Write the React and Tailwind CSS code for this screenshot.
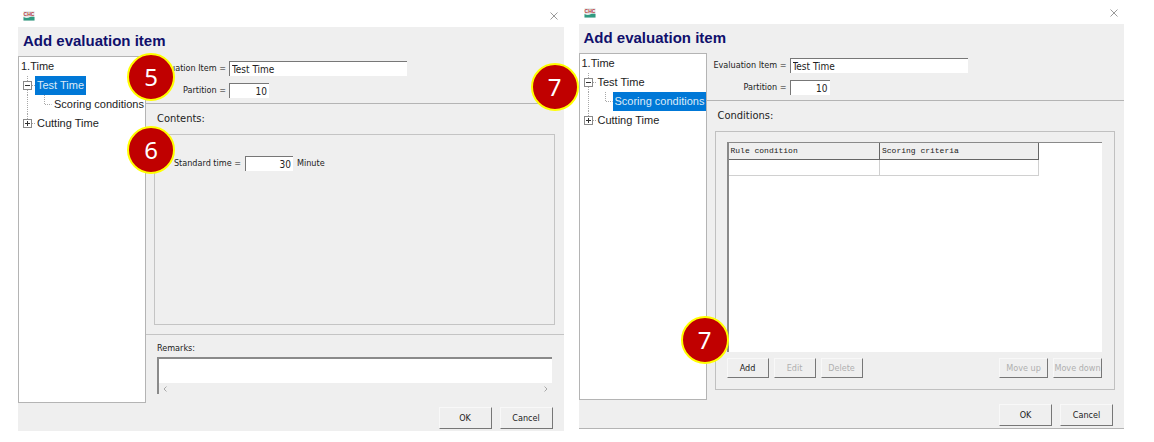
import React, { useState } from 'react';

// --- ICONS ---
const Logo = () => (
  <svg className="w-3 h-[10px]" viewBox="0 0 24 20" role="img" aria-label="CHC">
    <rect x="1" y="0" width="22" height="20" fill="#e6ecea" />
    <text x="12" y="9" textAnchor="middle" fontSize="10" fontWeight="700" fontFamily="Liberation Sans, sans-serif" fill="#b8383f">CHC</text>
    <path d="M1 12c5 3 9 2 13 0 4-1 7-1 9 0v7H1z" fill="#2f9a80" />
  </svg>
);

const IconClose = () => (
  <svg className="w-2 h-2" viewBox="0 0 8 8" fill="none" stroke="#9a9a9a"><path d="M.5.5l7 7M7.5.5l-7 7" /></svg>
);

// Dotted branch with the expand / collapse box
const Branch = ({ open }) => (
  <svg className="w-4 h-[19px] shrink-0" viewBox="0 0 16 19" fill="none">
    <path d={open ? 'M8.5 0v19' : 'M8.5 0v6'} stroke="#a8a8a8" strokeDasharray="1 1" />
    <path d="M13 9.5h3" stroke="#a8a8a8" strokeDasharray="1 1" />
    <rect x="4.5" y="5.5" width="8" height="8" fill="#fff" stroke="#8a8a8a" />
    <path d={open ? 'M6 9.5h5' : 'M6 9.5h5M8.5 7v5'} stroke="#333" />
  </svg>
);

const SubBranch = () => (
  <svg className="w-[33px] h-[19px] shrink-0" viewBox="0 0 33 19" fill="none" stroke="#a8a8a8" strokeDasharray="1 1">
    <path d="M8.5 0v19M25.5 0v9.5h7" />
  </svg>
);

const Badge = ({ className, children }) => (
  <span className={`absolute z-10 flex size-12 items-center justify-center rounded-full border-2 border-[#ffff00] bg-[#c00000] font-['Noto_Sans',sans-serif] text-2xl text-white ${className}`}>
    {children}
  </span>
);

const Button = ({ className = '', ...props }) => (
  <button
    type="button"
    className={`whitespace-nowrap border border-t-[#f8f8f8] border-l-[#f8f8f8] border-r-[#777] border-b-[#777] bg-[#efefef] text-[#222] disabled:text-[#b0b0b0] ${className}`}
    {...props}
  />
);

const Field = ({ className = '', ...props }) => (
  <input
    className={`h-[15px] border-t border-l border-[#777] bg-white px-[2px] text-[10px] outline-none ${className}`}
    {...props}
  />
);

const TreeItem = ({ selected, children }) => (
  <button
    type="button"
    className={`h-[19px] whitespace-nowrap px-[2px] ${selected ? 'bg-[#0078d7] text-[#dcebf8]' : ''}`}
  >
    {children}
  </button>
);

const Tree = ({ selected }) => (
  <nav className="w-32 shrink-0 border border-[#b4b4b4] bg-white font-['Liberation_Sans',sans-serif] text-[11px] text-[#222]">
    <TreeItem>1.Time</TreeItem>
    <ul>
      <li className="flex"><Branch open /><TreeItem selected={selected === 'time'}>Test Time</TreeItem></li>
      <li className="flex"><SubBranch /><TreeItem selected={selected === 'scoring'}>Scoring conditions</TreeItem></li>
      <li className="flex"><Branch /><TreeItem>Cutting Time</TreeItem></li>
    </ul>
  </nav>
);

const ItemForm = ({ id }) => {
  const [name, setName] = useState('Test Time');
  const [partition, setPartition] = useState('10');

  return (
    <div className="grid grid-cols-[80px_1fr] items-center gap-x-[3px] gap-y-[7px] border-b border-[#b4b4b4] pt-[5px] pb-[5px]">
      <label htmlFor={`${id}-name`} className="whitespace-nowrap text-right">Evaluation Item =</label>
      <Field id={`${id}-name`} className="w-[178px]" value={name} onChange={(e) => setName(e.target.value)} />
      <label htmlFor={`${id}-partition`} className="text-right">Partition =</label>
      <Field id={`${id}-partition`} className="w-10 text-right" value={partition} onChange={(e) => setPartition(e.target.value)} />
    </div>
  );
};

const Dialog = ({ id, selected, className = '', children }) => (
  <section className={`relative min-w-0 flex-1 bg-[#efefef] ${className}`}>
    <header className="flex h-[22px] items-center justify-between bg-white pl-[5px] pr-[6px]">
      <Logo />
      <button type="button" aria-label="Close"><IconClose /></button>
    </header>
    <h2 className="h-[29px] pl-[5px] font-['Liberation_Sans',sans-serif] text-[15px] leading-7 font-bold text-[#10106c]">Add evaluation item</h2>
    <div className="flex min-h-[347px]">
      <Tree selected={selected} />
      <div className="flex min-w-0 flex-1 flex-col">
        <ItemForm id={id} />
        {children}
      </div>
    </div>
    <footer className="flex h-7 items-start justify-end gap-2 pt-1 pr-[11px]">
      <Button className="h-[22px] w-[53px]">OK</Button>
      <Button className="h-[22px] w-[53px]">Cancel</Button>
    </footer>
  </section>
);

const ContentsPanel = () => {
  const [time, setTime] = useState('30');

  return (
    <>
      <h3 className="pl-[11px] text-[11px] leading-[30px]">Contents:</h3>
      <div className="mr-[9px] mb-[9px] ml-2 flex-1 border border-[#c4c4c4] pt-[21px]">
        <div className="flex items-center">
          <label htmlFor="standard-time" className="w-[86px] whitespace-nowrap text-right">Standard time =</label>
          <Field id="standard-time" className="mx-1 w-12 text-right" value={time} onChange={(e) => setTime(e.target.value)} />
          <span>Minute</span>
        </div>
      </div>
      <div className="border-t border-[#c4c4c4] pt-[6px] pr-3 pb-[9px] pl-[11px]">
        <label htmlFor="remarks" className="mb-[2px] block leading-[14px]">Remarks:</label>
        <div className="border-t-2 border-l-2 border-[#8a8a8a]">
          <textarea id="remarks" className="block h-6 w-full resize-none bg-white outline-none" />
          <div className="flex h-[11px] items-center justify-between px-1">
            <svg className="h-[6px] w-1" viewBox="0 0 4 6" fill="none" stroke="#a8a8a8"><path d="M3.5.5L1 3l2.5 2.5" /></svg>
            <svg className="h-[6px] w-1" viewBox="0 0 4 6" fill="none" stroke="#a8a8a8"><path d="M.5.5L3 3 .5 5.5" /></svg>
          </div>
        </div>
      </div>
    </>
  );
};

const ConditionsPanel = () => (
  <>
    <h3 className="pl-[11px] text-[11px] leading-[30px]">Conditions:</h3>
    <div className="mr-[9px] mb-[10px] ml-2 flex flex-1 flex-col border border-[#c0c0c0] pt-[10px] pr-3 pb-[11px] pl-[11px]">
      <div className="flex-1 border-t border-l-2 border-[#8a8a8a] bg-white">
        <table className="table-fixed border-collapse font-['Liberation_Mono',monospace] text-[8px] leading-[14px]">
          <thead>
            <tr className="h-4 bg-[#efefef] text-left">
              <th className="w-[151px] border-r border-b border-[#666] px-[2px] font-normal">Rule condition</th>
              <th className="w-[159px] border-r border-b border-[#666] px-[2px] font-normal">Scoring criteria</th>
            </tr>
          </thead>
          <tbody>
            <tr className="h-4">
              <td className="border-r border-b border-[#d0d0d0]" />
              <td className="border-r border-b border-[#d0d0d0]" />
            </tr>
          </tbody>
        </table>
      </div>
      <div className="mt-[6px] flex gap-[5px]">
        <Button className="h-5 w-[42px]">Add</Button>
        <Button className="h-5 w-[42px]" disabled>Edit</Button>
        <Button className="h-5 w-[42px]" disabled>Delete</Button>
        <Button className="ml-auto h-5 w-[49px]" disabled>Move up</Button>
        <Button className="h-5 w-[49px]" disabled>Move down</Button>
      </div>
    </div>
  </>
);

export default function App() {
  return (
    <main className="flex min-h-screen items-start gap-[15px] bg-white pt-[5px] pr-[30px] pl-[18px] font-['DejaVu_Sans_Condensed','DejaVu_Sans',sans-serif] text-[9px] leading-[15px] text-[#222]">
      <Dialog id="contents" selected="time">
        <ContentsPanel />
        <Badge className="top-12 left-[109px]">5</Badge>
        <Badge className="top-[121px] left-[109px]">6</Badge>
      </Dialog>
      <Dialog id="conditions" selected="scoring" className="-mt-[3px] border-b border-[#b4b4b4]">
        <ConditionsPanel />
        <Badge className="top-[61px] -left-12">7</Badge>
        <Badge className="top-[314px] left-[102px]">7</Badge>
      </Dialog>
    </main>
  );
}
